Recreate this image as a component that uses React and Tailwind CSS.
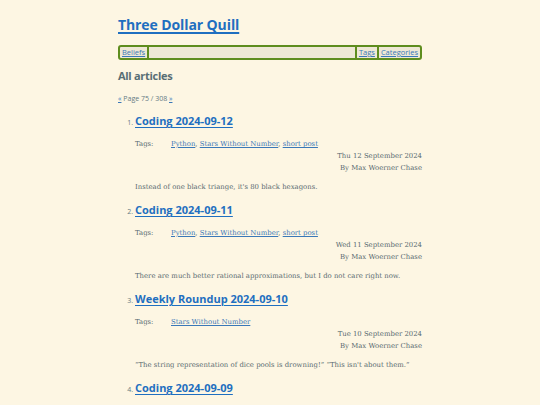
import React from "react";

const items = [
  {
    n: 1,
    title: "Coding 2024-09-12",
    tags: ["Python", "Stars Without Number", "short post"],
    date: "Thu 12 September 2024",
    summary: "Instead of one black triange, it's 80 black hexagons.",
  },
  {
    n: 2,
    title: "Coding 2024-09-11",
    tags: ["Python", "Stars Without Number", "short post"],
    date: "Wed 11 September 2024",
    summary: "There are much better rational approximations, but I do not care right now.",
  },
  {
    n: 3,
    title: "Weekly Roundup 2024-09-10",
    tags: ["Stars Without Number"],
    date: "Tue 10 September 2024",
    summary: "\u201cThe string representation of dice pools is drowning!\u201d \u201cThis isn't about them.\u201d",
  },
  {
    n: 4,
    title: "Coding 2024-09-09",
  },
];

const sans = "font-['Open_Sans',sans-serif]";
const serif = "font-['DejaVu_Serif',serif]";

export default function App() {
  return (
    <div className="min-h-screen bg-[#fdf6e3] overflow-hidden">
      <div className="w-[304px] mx-auto pt-[14px]">
        <h1 className={`${sans} text-[14px] leading-[22px] font-bold tracking-[-0.1px]`}>
          <a href="#" className="text-[#1f6fc0] underline decoration-[1.5px] underline-offset-[2px]">
            Three Dollar Quill
          </a>
        </h1>
        <nav className={`${sans} mt-[9px] h-[15px] flex items-stretch border-2 border-[#5e8d1e] rounded-[3px] bg-[#eee8d5] text-[7.5px] leading-[11px]`}>
          <a href="#" className="px-[2px] text-[#3a78b8] underline border-r-2 border-[#5e8d1e]">Beliefs</a>
          <div className="flex-1" />
          <a href="#" className="px-[2px] text-[#3a78b8] underline border-l-2 border-[#5e8d1e]">Tags</a>
          <a href="#" className="px-[2px] text-[#3a78b8] underline border-l-2 border-[#5e8d1e]">Categories</a>
        </nav>
        <h2 className={`${sans} mt-[8px] text-[11px] leading-[16px] font-bold tracking-[-0.3px] text-[#586e75]`}>All articles</h2>
        <p className={`${sans} mt-[10px] text-[7px] leading-[10px] text-[#657b83]`}>
          <a href="#" className="text-[#3a78b8] underline">«</a> Page 75 / 308{" "}
          <a href="#" className="text-[#3a78b8] underline">»</a>
        </p>
        <ol className={`${sans} mt-[9px] list-decimal pl-[17px] text-[7px] text-[#657b83] marker:text-[#657b83]`}>
          {items.map((it) => (
            <li key={it.n} className="mb-[9px]">
              <h3 className="text-[11px] leading-[16px] font-bold">
                <a href="#" className="text-[#1f6fc0] underline decoration-[1.2px] underline-offset-[1.5px]">
                  {it.title}
                </a>
              </h3>
              {it.tags && (
                <div className={`${serif} mt-[9px] text-[6.9px] leading-[12px] text-[#586a70]`}>
                  <div className="flex">
                    <span className="w-[36px] shrink-0">Tags:</span>
                    <span>
                      {it.tags.map((t, i) => (
                        <React.Fragment key={t}>
                          {i > 0 && ", "}
                          <a href="#" className="text-[#3a78b8] underline">{t}</a>
                        </React.Fragment>
                      ))}
                    </span>
                  </div>
                  <div className="text-right">{it.date}</div>
                  <div className="text-right">By Max Woerner Chase</div>
                  <p className="mt-[7px]">{it.summary}</p>
                </div>
              )}
            </li>
          ))}
        </ol>
      </div>
    </div>
  );
}
